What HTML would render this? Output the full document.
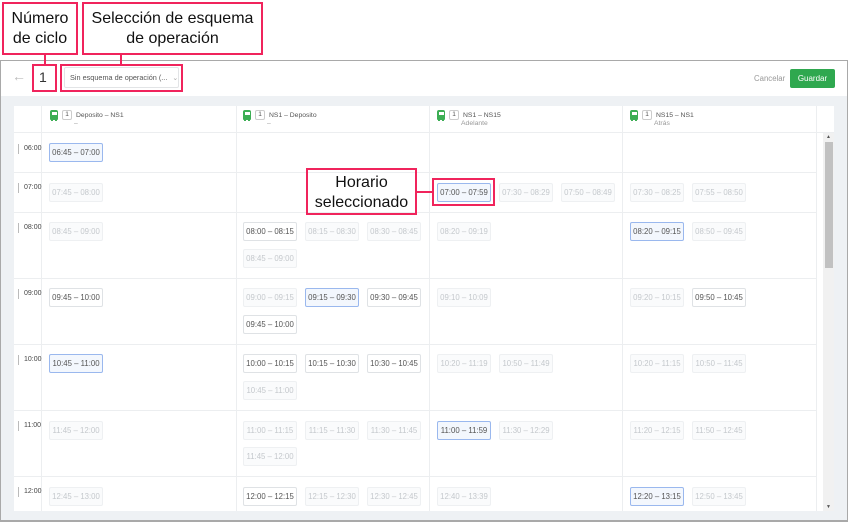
<!DOCTYPE html>
<html><head><meta charset="utf-8"><style>
*{box-sizing:border-box;margin:0;padding:0}
body{width:848px;height:522px;background:#fff;position:relative;overflow:hidden;font-family:"Liberation Sans",sans-serif}
.a{position:absolute}
.frame{left:0;top:60px;width:848px;height:462px;border:1px solid #a9a9a9;border-bottom:2px solid #a9a9a9;background:#eef1f4}
.hdr{left:1px;top:61px;width:846px;height:35px;background:#fff}
.tbl{left:14px;top:106px;width:820px;height:405px;background:#fff}
.vl{width:1px;background:#eceef0}
.hl{height:1px;background:#eceef0}
.c{position:absolute;width:54px;height:19px;border:1px solid #dfe2e5;border-radius:2px;font-size:7.8px;line-height:17px;text-align:center;color:#555;background:#fff;white-space:nowrap}
.d{color:#c4c8cc;border-color:#eef0f2;background:#fafbfc}
.s{border-color:#9ab8ee;background:#f3f7fd}
.t{font-size:7px;color:#444;padding-left:5px;border-left:1px solid #bbb;height:10px;line-height:10px}
.ch{font-size:6.8px;color:#555;white-space:nowrap}
.bx{display:inline-block;width:10px;height:10px;border:1px solid #ccc;border-radius:2px;font-size:6.5px;text-align:center;line-height:8px;vertical-align:middle;margin:0 4px}
.red{border:2px solid #f0245c}
.ann{font-size:16px;color:#111;text-align:center;line-height:20px}
.bus{display:inline-block;width:8px;height:10px;background:#3cae54;border-radius:2px 2px 1px 1px;vertical-align:middle;position:relative}
.bus:before{content:"";position:absolute;left:1.5px;top:2px;width:5px;height:3px;background:#fff}
.bus:after{content:"";position:absolute;left:1px;top:9px;width:6px;height:2px;border-left:2px solid #3cae54;border-right:2px solid #3cae54;box-sizing:border-box}
</style></head><body>
<div class="a frame"></div>
<div class="a hdr"></div>
<div class="a" style="left:12px;top:68px;font-size:14px;color:#bbb">&#8592;</div>
<div class="a" style="left:39px;top:69px;font-size:14px;color:#333">1</div>
<div class="a" style="left:64px;top:67px;width:115px;height:21px;border:1px solid #e2e4e6;border-radius:2px;font-size:7.3px;color:#555;line-height:19px;padding-left:5px;white-space:nowrap">Sin esquema de operación (... <span style="color:#aaa;margin-left:3px;font-size:7px">&#8964;</span></div>
<div class="a" style="left:754px;top:74px;font-size:7.8px;color:#999">Cancelar</div>
<div class="a" style="left:790px;top:69px;width:45px;height:19px;background:#2fa84f;border-radius:2px;color:#fff;font-size:8px;text-align:center;line-height:19px">Guardar</div>

<div class="a tbl"></div>
<div class="a vl" style="left:41px;top:106px;height:405px"></div>
<div class="a vl" style="left:236px;top:106px;height:405px"></div>
<div class="a vl" style="left:429px;top:106px;height:405px"></div>
<div class="a vl" style="left:622px;top:106px;height:405px"></div>
<div class="a vl" style="left:816px;top:106px;height:405px"></div>
<div class="a hl" style="left:14px;top:132px;width:820px"></div>
<div class="a hl" style="left:14px;top:172px;width:802px"></div>
<div class="a hl" style="left:14px;top:212px;width:802px"></div>
<div class="a hl" style="left:14px;top:278px;width:802px"></div>
<div class="a hl" style="left:14px;top:344px;width:802px"></div>
<div class="a hl" style="left:14px;top:410px;width:802px"></div>
<div class="a hl" style="left:14px;top:476px;width:802px"></div>
<div class="a" style="left:823px;top:133px;width:11px;height:378px;background:#f1f1f1"></div>
<div class="a" style="left:825px;top:142px;width:8px;height:126px;background:#c1c1c1"></div>
<div class="a" style="left:826px;top:134px;font-size:5px;color:#555">&#9650;</div>
<div class="a" style="left:826px;top:504px;font-size:5px;color:#555">&#9660;</div>

<div class="a ch" style="left:50px;top:110px"><span class="bus"></span><span class="bx">1</span>Deposito – NS1<div style="padding-left:24px;color:#999">–</div></div>
<div class="a ch" style="left:243px;top:110px"><span class="bus"></span><span class="bx">1</span>NS1 – Deposito<div style="padding-left:24px;color:#999">–</div></div>
<div class="a ch" style="left:437px;top:110px"><span class="bus"></span><span class="bx">1</span>NS1 – NS15<div style="padding-left:24px;color:#999">Adelante</div></div>
<div class="a ch" style="left:630px;top:110px"><span class="bus"></span><span class="bx">1</span>NS15 – NS1<div style="padding-left:24px;color:#999">Atrás</div></div>

<div class="a t" style="left:18px;top:144px">06:00</div>
<div class="a t" style="left:18px;top:183px">07:00</div>
<div class="a t" style="left:18px;top:223px">08:00</div>
<div class="a t" style="left:18px;top:289px">09:00</div>
<div class="a t" style="left:18px;top:355px">10:00</div>
<div class="a t" style="left:18px;top:421px">11:00</div>
<div class="a t" style="left:18px;top:487px">12:00</div>

<div class="c s" style="left:49px;top:143px">06:45 – 07:00</div>

<div class="c d" style="left:49px;top:183px">07:45 – 08:00</div>
<div class="c s" style="left:437px;top:183px">07:00 – 07:59</div>
<div class="c d" style="left:499px;top:183px">07:30 – 08:29</div>
<div class="c d" style="left:561px;top:183px">07:50 – 08:49</div>
<div class="c d" style="left:630px;top:183px">07:30 – 08:25</div>
<div class="c d" style="left:692px;top:183px">07:55 – 08:50</div>

<div class="c d" style="left:49px;top:222px">08:45 – 09:00</div>
<div class="c" style="left:243px;top:222px">08:00 – 08:15</div>
<div class="c d" style="left:305px;top:222px">08:15 – 08:30</div>
<div class="c d" style="left:367px;top:222px">08:30 – 08:45</div>
<div class="c d" style="left:243px;top:249px">08:45 – 09:00</div>
<div class="c d" style="left:437px;top:222px">08:20 – 09:19</div>
<div class="c s" style="left:630px;top:222px">08:20 – 09:15</div>
<div class="c d" style="left:692px;top:222px">08:50 – 09:45</div>

<div class="c" style="left:49px;top:288px">09:45 – 10:00</div>
<div class="c d" style="left:243px;top:288px">09:00 – 09:15</div>
<div class="c s" style="left:305px;top:288px">09:15 – 09:30</div>
<div class="c" style="left:367px;top:288px">09:30 – 09:45</div>
<div class="c" style="left:243px;top:315px">09:45 – 10:00</div>
<div class="c d" style="left:437px;top:288px">09:10 – 10:09</div>
<div class="c d" style="left:630px;top:288px">09:20 – 10:15</div>
<div class="c" style="left:692px;top:288px">09:50 – 10:45</div>

<div class="c s" style="left:49px;top:354px">10:45 – 11:00</div>
<div class="c" style="left:243px;top:354px">10:00 – 10:15</div>
<div class="c" style="left:305px;top:354px">10:15 – 10:30</div>
<div class="c" style="left:367px;top:354px">10:30 – 10:45</div>
<div class="c d" style="left:243px;top:381px">10:45 – 11:00</div>
<div class="c d" style="left:437px;top:354px">10:20 – 11:19</div>
<div class="c d" style="left:499px;top:354px">10:50 – 11:49</div>
<div class="c d" style="left:630px;top:354px">10:20 – 11:15</div>
<div class="c d" style="left:692px;top:354px">10:50 – 11:45</div>

<div class="c d" style="left:49px;top:421px">11:45 – 12:00</div>
<div class="c d" style="left:243px;top:421px">11:00 – 11:15</div>
<div class="c d" style="left:305px;top:421px">11:15 – 11:30</div>
<div class="c d" style="left:367px;top:421px">11:30 – 11:45</div>
<div class="c d" style="left:243px;top:447px">11:45 – 12:00</div>
<div class="c s" style="left:437px;top:421px">11:00 – 11:59</div>
<div class="c d" style="left:499px;top:421px">11:30 – 12:29</div>
<div class="c d" style="left:630px;top:421px">11:20 – 12:15</div>
<div class="c d" style="left:692px;top:421px">11:50 – 12:45</div>

<div class="c d" style="left:49px;top:487px">12:45 – 13:00</div>
<div class="c" style="left:243px;top:487px">12:00 – 12:15</div>
<div class="c d" style="left:305px;top:487px">12:15 – 12:30</div>
<div class="c d" style="left:367px;top:487px">12:30 – 12:45</div>
<div class="c d" style="left:437px;top:487px">12:40 – 13:39</div>
<div class="c s" style="left:630px;top:487px">12:20 – 13:15</div>
<div class="c d" style="left:692px;top:487px">12:50 – 13:45</div>

<div class="a red ann" style="left:2px;top:2px;width:76px;height:53px;padding-top:5px">Número<br>de ciclo</div>
<div class="a red ann" style="left:82px;top:2px;width:181px;height:53px;padding-top:5px">Selección de esquema<br>de operación</div>
<div class="a" style="left:44px;top:55px;width:2px;height:9px;background:#f0245c"></div>
<div class="a" style="left:120px;top:55px;width:2px;height:9px;background:#f0245c"></div>
<div class="a red" style="left:32px;top:64px;width:25px;height:28px"></div>
<div class="a red" style="left:60px;top:64px;width:123px;height:28px"></div>
<div class="a red ann" style="left:306px;top:168px;width:111px;height:47px;padding-top:3px">Horario<br>seleccionado</div>
<div class="a" style="left:417px;top:191px;width:16px;height:2px;background:#f0245c"></div>
<div class="a red" style="left:432px;top:178px;width:63px;height:28px"></div>
</body></html>
